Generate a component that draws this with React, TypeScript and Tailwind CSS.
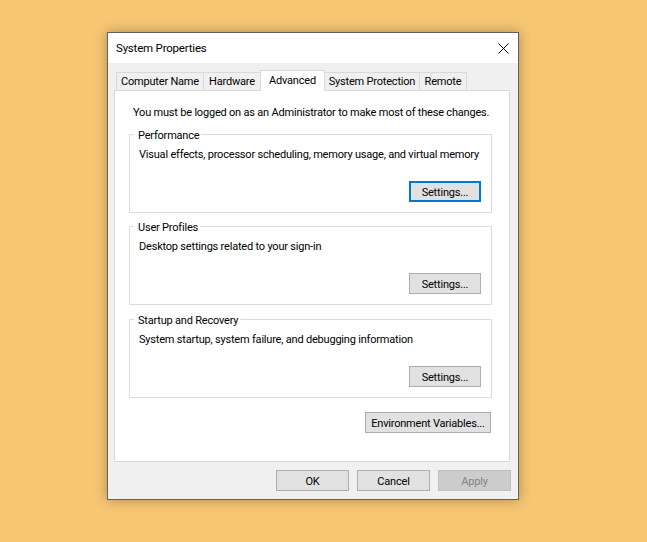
function Btn({
  children,
  w = "w-[72px]",
  focused = false,
  disabled = false,
}: {
  children: React.ReactNode;
  w?: string;
  focused?: boolean;
  disabled?: boolean;
}) {
  const base = `${w} h-[21px] flex items-center justify-center leading-[15px] pt-px`;
  if (disabled)
    return (
      <div className={`${base} bg-[#cccccc] border border-[#bfbfbf] text-[#838383]`}>{children}</div>
    );
  if (focused)
    return (
      <div className={`${base} bg-[#e1e1e1] border-2 border-[#0078d7] text-black`}>{children}</div>
    );
  return (
    <div className={`${base} bg-[#e1e1e1] border border-[#adadad] text-black`}>{children}</div>
  );
}

function Group({
  title,
  desc,
  focused = false,
  className = "",
}: {
  title: string;
  desc: string;
  focused?: boolean;
  className?: string;
}) {
  return (
    <div className={`relative ml-[14px] w-[363px] border border-[#dcdcdc] flex flex-col pt-[12px] pb-[10px] ${className}`}>
      <span className="absolute top-[-7px] left-[4px] bg-white pl-[4px] pr-[2px] leading-[15px]">{title}</span>
      <div className="pl-[9px] leading-[15px] h-[15px]">{desc}</div>
      <div className="mt-[19px] self-end mr-[10px]">
        <Btn focused={focused}>Settings...</Btn>
      </div>
    </div>
  );
}

function Tab({ label, w, selected = false }: { label: string; w: string; selected?: boolean }) {
  if (selected)
    return (
      <div className={`${w} -ml-px relative z-10 h-[21px] -mb-px bg-white border-t border-x border-[#d9d9d9] pt-[2px] text-center leading-[15px]`}>
        {label}
      </div>
    );
  return (
    <div className={`${w} -ml-px h-[18px] bg-[#f0f0f0] border-t border-x border-[#d9d9d9] flex items-center justify-center leading-[15px]`}>
      {label}
    </div>
  );
}

export default function App() {
  return (
    <div className="w-[647px] h-[542px] bg-[#f7c673] pt-[32px] pl-[107px] font-[Roboto,sans-serif] text-[11px] tracking-[-0.2px] text-black">
      <div className="w-[412px] h-[468px] border border-[#626262] shadow-[0_0_12px_rgba(0,0,0,0.3)] flex flex-col">
        {/* Title bar */}
        <div className="h-[30px] bg-white flex items-center justify-between pl-[8px] pr-[9px] shrink-0">
          <span className="text-[11.5px] leading-[15px]">System Properties</span>
          <svg width="11" height="11" viewBox="0 0 11 11" className="block">
            <path d="M0.5 0.5 L10.5 10.5 M10.5 0.5 L0.5 10.5" stroke="#000" strokeWidth="1" fill="none" />
          </svg>
        </div>
        {/* Body */}
        <div className="flex-1 bg-[#f0f0f0] pl-[6px] pt-[7px] flex flex-col">
          {/* Tabs */}
          <div className="flex items-end h-[20px] pl-[3px]">
            <Tab label="Computer Name" w="w-[88px]" />
            <Tab label="Hardware" w="w-[58px]" />
            <Tab label="Advanced" w="w-[65px]" selected />
            <Tab label="System Protection" w="w-[96px]" />
            <Tab label="Remote" w="w-[48px]" />
          </div>
          {/* Panel */}
          <div className="w-[396px] h-[372px] bg-white border border-[#d9d9d9] flex flex-col pt-[14px]">
            <div className="pl-[18px] leading-[15px] h-[15px]">
              You must be logged on as an Administrator to make most of these changes.
            </div>
            <Group
              className="mt-[14px]"
              title="Performance"
              desc="Visual effects, processor scheduling, memory usage, and virtual memory"
              focused
            />
            <Group className="mt-[13px]" title="User Profiles" desc="Desktop settings related to your sign-in" />
            <Group
              className="mt-[14px]"
              title="Startup and Recovery"
              desc="System startup, system failure, and debugging information"
            />
            <div className="mt-[14px] self-end mr-[18px]">
              <Btn w="w-[126px]">Environment Variables...</Btn>
            </div>
          </div>
          {/* Bottom buttons */}
          <div className="mt-[8px] w-[397px] flex justify-end gap-[8px]">
            <Btn w="w-[73px]">OK</Btn>
            <Btn w="w-[73px]">Cancel</Btn>
            <Btn w="w-[73px]" disabled>
              Apply
            </Btn>
          </div>
        </div>
      </div>
    </div>
  );
}
